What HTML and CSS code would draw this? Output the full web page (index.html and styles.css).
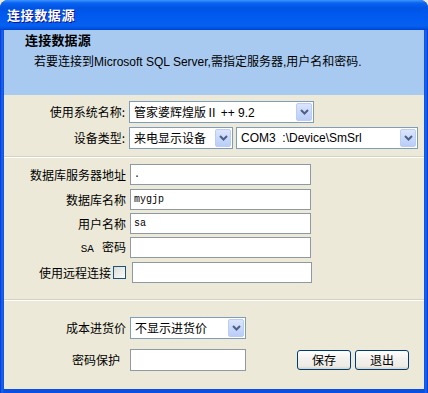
FILE: index.html
```html
<!DOCTYPE html>
<html lang="zh-CN">
<head>
    <meta charset="UTF-8">
    <title>连接数据源</title>
    <link rel="stylesheet" href="styles.css">
</head>
<body>
    <div class="window">
        <div class="titlebar">连接数据源</div>

        <div class="client">
            <!-- 顶部说明 -->
            <div class="banner">
                <div class="banner-title">连接数据源</div>
                <div class="banner-text">若要连接到<span class="latin">Microsoft SQL Server,</span>需指定服务器<span class="latin">,</span>用户名和密码<span class="latin">.</span></div>
            </div>

            <!-- 系统与设备 -->
            <div class="section section-system">
                <div class="row">
                    <span class="label">使用系统名称:</span>
                    <div class="combo combo-system">
                        <span class="combo-text">管家婆辉煌版Ⅱ <span class="latin">++ 9.2</span></span>
                        <span class="combo-btn"><svg width="9" height="6" viewBox="0 0 9 6"><polyline points="1,1 4.5,4.5 8,1" fill="none" stroke="#4d6185" stroke-width="2"/></svg></span>
                    </div>
                </div>
                <div class="row">
                    <span class="label">设备类型:</span>
                    <div class="combo combo-device">
                        <span class="combo-text">来电显示设备</span>
                        <span class="combo-btn"><svg width="9" height="6" viewBox="0 0 9 6"><polyline points="1,1 4.5,4.5 8,1" fill="none" stroke="#4d6185" stroke-width="2"/></svg></span>
                    </div>
                    <div class="combo combo-port">
                        <span class="combo-text latin">COM3&nbsp;&nbsp;:\Device\SmSrl</span>
                        <span class="combo-btn"><svg width="9" height="6" viewBox="0 0 9 6"><polyline points="1,1 4.5,4.5 8,1" fill="none" stroke="#4d6185" stroke-width="2"/></svg></span>
                    </div>
                </div>
            </div>

            <div class="separator"></div>

            <!-- 数据库连接 -->
            <div class="section section-db">
                <div class="row">
                    <span class="label">数据库服务器地址</span>
                    <div class="field">.</div>
                </div>
                <div class="row row-shift">
                    <span class="label">数据库名称</span>
                    <div class="field">mygjp</div>
                </div>
                <div class="row">
                    <span class="label">用户名称</span>
                    <div class="field">sa</div>
                </div>
                <div class="row">
                    <span class="label"><span class="mono">SA</span>&nbsp;&nbsp;&nbsp;密码</span>
                    <div class="field"></div>
                </div>
                <div class="row row-shift">
                    <span class="label label-check">使用远程连接<span class="checkbox"></span></span>
                    <div class="field field-remote"></div>
                </div>
            </div>

            <div class="separator"></div>

            <!-- 其他选项 -->
            <div class="section section-extra">
                <div class="row">
                    <span class="label">成本进货价</span>
                    <div class="combo combo-cost">
                        <span class="combo-text">不显示进货价</span>
                        <span class="combo-btn"><svg width="9" height="6" viewBox="0 0 9 6"><polyline points="1,1 4.5,4.5 8,1" fill="none" stroke="#4d6185" stroke-width="2"/></svg></span>
                    </div>
                </div>
                <div class="row">
                    <span class="label label-pwd">密码保护</span>
                    <div class="field field-pwd"></div>
                    <div class="buttons">
                        <button class="btn">保存</button>
                        <button class="btn">退出</button>
                    </div>
                </div>
            </div>
        </div>
    </div>
</body>
</html>
```

FILE: styles.css
```css
body, html {
    margin: 0;
    padding: 0;
    background: #ece9d8;
    font-family: "Noto Sans CJK SC", sans-serif;
    font-size: 12px;
    color: #000;
}
.window {
    width: 428px;
    height: 393px;
    display: flex;
    flex-direction: column;
    background: linear-gradient(90deg, #0831d9, #166aee 2px, #0a4fe2 4px, #0a4fe2 424px, #166aee 426px, #0831d9);
    border-radius: 8px 8px 0 0;
    overflow: hidden;
}
.titlebar {
    height: 30px;
    line-height: 29px;
    padding-left: 7px;
    color: #fff;
    font-size: 13px;
    font-weight: bold;
    letter-spacing: 0.6px;
    text-shadow: 1px 1px #0f1089;
    background: linear-gradient(#3d95ff, #0a63f2 3px, #0054e3 8px, #0058ee 45%, #0560f0 85%, #0054e3 94%, #0040cf);
}
.client {
    flex: 1;
    margin: 0 4px 4px 4px;
    background: #ece9d8;
    display: flex;
    flex-direction: column;
}
.latin {
    font-family: "Liberation Sans", sans-serif;
}
.mono {
    font-family: "Liberation Mono", monospace;
    font-size: 11px;
}
.banner {
    height: 65px;
    box-sizing: border-box;
    padding: 2px 0 0 21px;
    background: #a9caf0;
}
.banner-title {
    font-size: 13px;
    font-weight: bold;
    line-height: 16px;
    letter-spacing: 0.2px;
}
.banner-text {
    margin-top: 5px;
    padding-left: 9px;
    line-height: 16px;
}
.section {
    display: flex;
    flex-direction: column;
}
.section-system {
    padding: 6px 0 7px;
    gap: 4px;
}
.section-db {
    padding: 6px 0 16px;
    gap: 3px;
}
.section-extra {
    padding: 16px 15px 0 0;
    gap: 10px;
}
.separator {
    height: 1px;
    border-top: 1px solid #d6d2c2;
    background: #fff;
}
.row {
    display: flex;
    align-items: center;
    gap: 4px;
}
.row-shift {
    margin-top: 1px;
}
.label {
    width: 122px;
    flex: none;
    text-align: right;
    line-height: 16px;
    white-space: nowrap;
}
.section-system .label {
    width: 121px;
}
.label-check {
    display: flex;
    justify-content: flex-end;
    align-items: center;
    gap: 1px;
}
.label-pwd {
    box-sizing: border-box;
    padding-right: 6px;
}
.checkbox {
    width: 11px;
    height: 11px;
    margin-left: 1px;
    border: 1px solid #1c5180;
    background: linear-gradient(135deg, #dcdcd7, #fbfbf9);
}
.field {
    width: 181px;
    height: 21px;
    box-sizing: border-box;
    border: 1px solid #8f99a3;
    background: #fff;
    padding: 0 3px;
    font-family: "Liberation Mono", monospace;
    font-size: 10px;
    line-height: 19px;
}
.field-remote {
    width: 180px;
    margin-left: 2px;
}
.field-pwd {
    width: 116px;
    height: 22px;
}
.combo {
    height: 22px;
    box-sizing: border-box;
    border: 1px solid #7f9db9;
    background: #fff;
    display: flex;
    align-items: center;
    padding: 1px;
}
.combo-system {
    width: 185px;
}
.combo-device {
    width: 104px;
}
.combo-port {
    width: 182px;
    margin-left: -1px;
}
.combo-cost {
    width: 116px;
}
.combo-text {
    flex: 1;
    padding-left: 3px;
    line-height: 16px;
    white-space: nowrap;
    overflow: hidden;
}
.combo-text.latin, .combo-text .latin {
    font-size: 12px;
}
.combo-btn {
    width: 16px;
    height: 18px;
    flex: none;
    box-sizing: border-box;
    border: 1px solid #bccdf3;
    border-radius: 2px;
    background: linear-gradient(#dbe5fd, #b9cdf8);
    display: flex;
    align-items: center;
    justify-content: center;
}
.buttons {
    margin-left: auto;
    display: flex;
    gap: 4px;
}
.btn {
    width: 54px;
    height: 20px;
    padding: 0;
    border: 1px solid #003c74;
    border-radius: 3px;
    background: linear-gradient(#fff, #f3f2ee 40%, #ecebe6 85%, #d6d0c5);
    font-family: "Noto Sans CJK SC", sans-serif;
    font-size: 12px;
    line-height: 16px;
    color: #000;
}
```
